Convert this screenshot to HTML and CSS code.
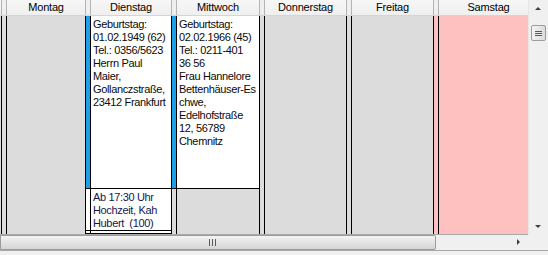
FILE: index.html
```html
<!DOCTYPE html>
<html lang="de">
<head>
    <meta charset="UTF-8">
    <title>Wochenansicht</title>
    <link rel="stylesheet" href="styles.css">
</head>
<body>
    <div class="frame">
        <div class="view">
            <div class="head">
                <div class="hcell">Montag</div>
                <div class="hcell">Dienstag</div>
                <div class="hcell">Mittwoch</div>
                <div class="hcell">Donnerstag</div>
                <div class="hcell">Freitag</div>
                <div class="hcell sat">Samstag</div>
            </div>
            <div class="days">
                <div class="day">
                    <div class="row fill"><div class="strip"></div><div class="area"></div></div>
                </div>
                <div class="day">
                    <div class="row appt big">
                        <div class="strip busy"></div>
                        <div class="area text">Geburtstag:<br>01.02.1949 (62)<br>Tel.: 0356/5623<br>Herrn Paul<br>Maier,<br>Gollanczstraße,<br>23412 Frankfurt</div>
                    </div>
                    <div class="row appt small">
                        <div class="strip free"></div>
                        <div class="area text navy">Ab 17:30 Uhr<br>Hochzeit, Kah<br>Hubert&nbsp; (100)</div>
                    </div>
                    <div class="row appt fill">
                        <div class="strip free"></div>
                        <div class="area text navy">UT Termin</div>
                    </div>
                </div>
                <div class="day">
                    <div class="row appt big">
                        <div class="strip busy"></div>
                        <div class="area text">Geburtstag:<br>02.02.1966 (45)<br>Tel.: 0211-401<br>36 56<br>Frau Hannelore<br>Bettenhäuser-Es<br>chwe,<br>Edelhofstraße<br>12, 56789<br>Chemnitz</div>
                    </div>
                    <div class="row fill"><div class="strip"></div><div class="area"></div></div>
                </div>
                <div class="day">
                    <div class="row fill"><div class="strip"></div><div class="area"></div></div>
                </div>
                <div class="day">
                    <div class="row fill"><div class="strip"></div><div class="area"></div></div>
                </div>
                <div class="day weekend">
                    <div class="row fill"><div class="strip"></div><div class="area"></div></div>
                </div>
            </div>
        </div>

        <div class="vscroll">
            <span class="arrow up"></span>
            <div class="vthumb">
                <svg width="7" height="7" viewBox="0 0 7 7"><path d="M0 1.5h7M0 3.5h7M0 5.5h7" stroke="#5a5a5a" stroke-width="1"/></svg>
            </div>
            <span class="arrow down"></span>
        </div>

        <div class="hscroll">
            <div class="hthumb">
                <svg width="9" height="7" viewBox="0 0 9 7"><path d="M1.5 0v7M4.5 0v7M7.5 0v7" stroke="#5a5a5a" stroke-width="1"/></svg>
            </div>
            <div class="htrack"><span class="arrow right"></span></div>
        </div>
        <div class="corner"></div>
        <div class="bottom"></div>
    </div>
</body>
</html>
```

FILE: styles.css
```css
body {
    margin: 0;
    background-color: #f0f0f0;
    font-family: "Liberation Sans", Arial, sans-serif;
    font-size: 11px;
}
.frame {
    width: 548px;
    height: 255px;
    display: grid;
    grid-template-columns: 528px 20px;
    grid-template-rows: 234px 16px 5px;
    overflow: hidden;
}
.view {
    display: flex;
    flex-direction: column;
    overflow: hidden;
    background-color: #dcdcdc;
}

/* header */
.head {
    display: grid;
    grid-template-columns: 85px 86px 88px 87px 87px 95px;
    height: 15px;
    border-bottom: 1px solid #d5d5d5;
    background: linear-gradient(#f7f7f7, #efefef);
}
.hcell {
    border-left: 1px solid #b4b4b4;
    box-shadow: inset 4px 0 0 #efefef, inset 5px 0 0 #b4b4b4;
    padding-left: 5px;
    text-align: center;
    line-height: 15px;
    color: #000;
    white-space: nowrap;
    letter-spacing: -0.2px;
}
.hcell:first-child {
    margin-left: 1px;
}
.hcell.sat {
    padding-left: 15px;
}

/* day columns */
.days {
    flex: 1;
    display: grid;
    grid-template-columns: 85px 86px 88px 87px 87px 95px;
    min-height: 0;
}
.day {
    display: flex;
    flex-direction: column;
    border-left: 1px solid #000;
    background-color: #dcdcdc;
    overflow: hidden;
}
.day:first-child {
    margin-left: 1px;
}
.day.weekend {
    background-color: #ffc0c0;
}
.row {
    display: flex;
}
.row.fill {
    flex: 1;
}
.strip {
    width: 4px;
    flex-shrink: 0;
    border-right: 1px solid #000;
}
.strip.busy {
    background-color: #1ea0e6;
}
.strip.free {
    background-color: #fff;
}
.area {
    flex: 1;
}
.appt {
    border-bottom: 1px solid #000;
    overflow: hidden;
}
.appt.big {
    height: 172px;
}
.appt.small {
    height: 41px;
}
.text {
    background-color: #fff;
    color: #0a0a0a;
    line-height: 13px;
    letter-spacing: -0.35px;
    padding: 2px 0 0 2px;
    white-space: nowrap;
    overflow: hidden;
}
.text.navy {
    color: #16164e;
}

/* scrollbars */
.vscroll {
    background-color: #f0f0f0;
    position: relative;
    border-left: 1px solid #e6e6e6;
}
.vthumb {
    position: absolute;
    left: 2px;
    top: 25px;
    width: 13px;
    height: 14px;
    border: 1px solid #9c9c9c;
    border-radius: 2px;
    background: linear-gradient(90deg, #f4f4f4, #dcdcdc);
    display: flex;
    align-items: center;
    justify-content: center;
}
.arrow {
    position: absolute;
    width: 0;
    height: 0;
}
.arrow.up {
    left: 6px;
    top: 7px;
    border-left: 3px solid transparent;
    border-right: 3px solid transparent;
    border-bottom: 3px solid #404040;
}
.arrow.down {
    left: 6px;
    top: 225px;
    border-left: 3px solid transparent;
    border-right: 3px solid transparent;
    border-top: 3px solid #404040;
}
.hscroll {
    display: flex;
    border-top: 1px solid #a8a8a8;
    background-color: #f0f0f0;
}
.hthumb {
    width: 436px;
    border: 1px solid #9c9c9c;
    border-radius: 0 2px 2px 0;
    background: linear-gradient(#f4f4f4, #d4d4d4);
    display: flex;
    align-items: center;
    justify-content: center;
    box-sizing: border-box;
}
.hthumb svg {
    margin-left: -12px;
}
.htrack {
    flex: 1;
    position: relative;
}
.arrow.right {
    left: 81px;
    top: 4px;
    border-top: 3px solid transparent;
    border-bottom: 3px solid transparent;
    border-left: 3px solid #404040;
}
.corner {
    background-color: #f0f0f0;
}
.bottom {
    grid-column: 1 / 3;
    border-top: 1px solid #a8a8a8;
    background-color: #f0f0f0;
}
```
